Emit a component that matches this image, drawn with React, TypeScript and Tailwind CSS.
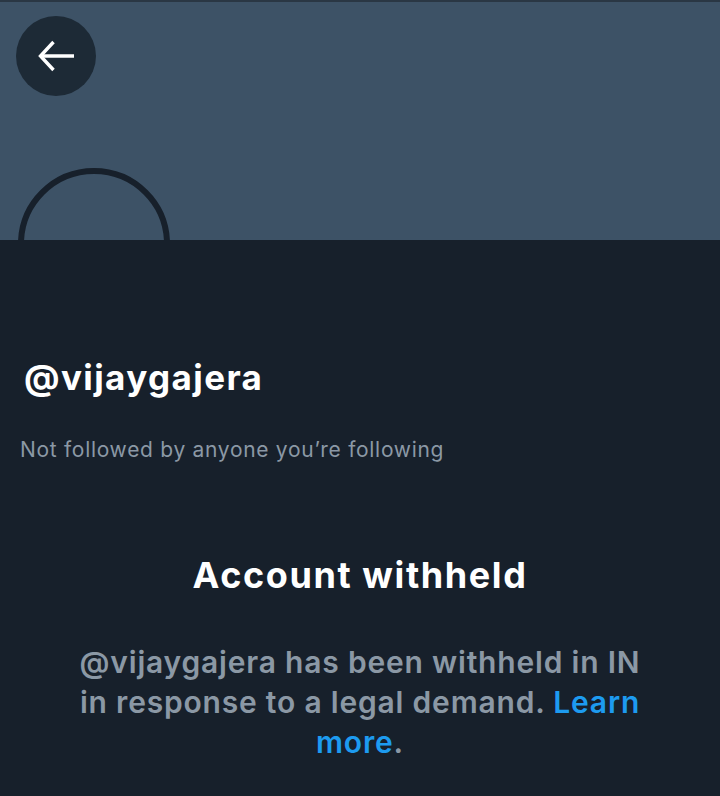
import React from 'react';

const App: React.FC = () => {
  return (
    <div className="w-[720px] h-[796px] bg-[#17202b] overflow-hidden" style={{ fontFamily: 'Inter, "Open Sans", sans-serif' }}>
      <div className="relative h-[240px] bg-[#3d5266] border-t-2 border-[#2a3744] overflow-hidden">
        <button className="absolute left-[16px] top-[14px] w-[80px] h-[80px] rounded-full bg-[#1d2a36]">
          <svg width="80" height="80" viewBox="0 0 80 80" fill="none" stroke="white" strokeWidth="3.4" strokeLinecap="butt">
            <path d="M25 40H58" />
            <path d="M37.5 26 24.5 40l13 14" />
          </svg>
        </button>
        <div className="absolute left-[18px] top-[166px] w-[152px] h-[152px] rounded-full border-[6px] border-[#17202b]" />
      </div>

      <div className="px-[24px] pt-[120px]">
        <h1 className="text-[35px] font-bold text-white leading-none tracking-[1.4px]">@vijaygajera</h1>
        <p className="mt-[44px] -ml-[4px] text-[21px] text-[#8b98a5] leading-none tracking-[0.7px]">Not followed by anyone you’re following</p>
      </div>

      <div className="flex flex-col items-center mt-[97px]">
        <h2 className="text-[36px] font-bold text-white leading-none tracking-[1.6px]">Account withheld</h2>
        <p className="mt-[49px] text-center text-[30px] font-semibold text-[#8b98a5] leading-[40px] tracking-[0.8px] whitespace-nowrap">
          @vijaygajera has been withheld in IN
          <br />
          in response to a legal demand. <span className="text-[#1d9bf0]">Learn</span>
          <br />
          <span className="text-[#1d9bf0]">more</span>.
        </p>
      </div>
    </div>
  );
};

export default App;
